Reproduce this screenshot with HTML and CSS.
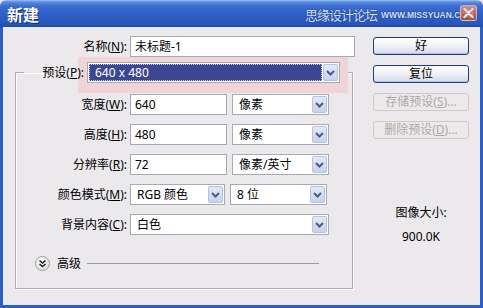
FILE: index.html
```html
<!DOCTYPE html>
<html lang="zh">
<head>
<meta charset="utf-8">
<title>新建</title>
<link rel="stylesheet" href="styles.css">
</head>
<body>
<div class="window">
  <div class="titlebar">
    <span class="title">新建</span>
    <span class="wm"><span class="wm-cn">思缘设计论坛</span><span class="wm-en">WWW.MISSYUAN.COM</span></span>
    <span class="close"><svg width="11" height="10" viewBox="0 0 11 10"><path d="M1.5 1 L9.5 9 M9.5 1 L1.5 9" stroke="#fff" stroke-width="2.2" stroke-linecap="round"/></svg></span>
  </div>
  <div class="frame">
    <div class="main">
      <div class="row name-row">
        <span class="lbl lbl-name">名称(<u>N</u>):</span>
        <div class="input w-name">未标题-1</div>
      </div>
      <fieldset class="group">
        <legend class="preset">
          <span class="plbl">预设(<u>P</u>):</span>
          <div class="select sel-preset">
            <span class="val focus">640 x 480</span>
            <span class="arrow"><svg width="9" height="6" viewBox="0 0 9 6"><path d="M1 1 L4.5 4.5 L8 1" fill="none" stroke="#4a5d86" stroke-width="2"/></svg></span>
          </div>
        </legend>
        <div class="rows">
          <div class="row">
            <span class="lbl">宽度(<u>W</u>):</span>
            <div class="input w-num">640</div>
            <div class="select w-unit"><span class="val">像素</span><span class="arrow"><svg width="9" height="6" viewBox="0 0 9 6"><path d="M1 1 L4.5 4.5 L8 1" fill="none" stroke="#4a5d86" stroke-width="2"/></svg></span></div>
          </div>
          <div class="row">
            <span class="lbl">高度(<u>H</u>):</span>
            <div class="input w-num">480</div>
            <div class="select w-unit"><span class="val">像素</span><span class="arrow"><svg width="9" height="6" viewBox="0 0 9 6"><path d="M1 1 L4.5 4.5 L8 1" fill="none" stroke="#4a5d86" stroke-width="2"/></svg></span></div>
          </div>
          <div class="row">
            <span class="lbl">分辨率(<u>R</u>):</span>
            <div class="input w-num">72</div>
            <div class="select w-unit"><span class="val">像素/英寸</span><span class="arrow"><svg width="9" height="6" viewBox="0 0 9 6"><path d="M1 1 L4.5 4.5 L8 1" fill="none" stroke="#4a5d86" stroke-width="2"/></svg></span></div>
          </div>
          <div class="row">
            <span class="lbl">颜色模式(<u>M</u>):</span>
            <div class="select w-mode"><span class="val">RGB 颜色</span><span class="arrow"><svg width="9" height="6" viewBox="0 0 9 6"><path d="M1 1 L4.5 4.5 L8 1" fill="none" stroke="#4a5d86" stroke-width="2"/></svg></span></div>
            <div class="select w-unit"><span class="val">8 位</span><span class="arrow"><svg width="9" height="6" viewBox="0 0 9 6"><path d="M1 1 L4.5 4.5 L8 1" fill="none" stroke="#4a5d86" stroke-width="2"/></svg></span></div>
          </div>
          <div class="row">
            <span class="lbl">背景内容(<u>C</u>):</span>
            <div class="select w-bg"><span class="val">白色</span><span class="arrow"><svg width="9" height="6" viewBox="0 0 9 6"><path d="M1 1 L4.5 4.5 L8 1" fill="none" stroke="#4a5d86" stroke-width="2"/></svg></span></div>
          </div>
        </div>
        <div class="adv">
          <span class="adv-btn"><svg width="9" height="9" viewBox="0 0 9 9"><path d="M1.5 1.5 L4.5 4 L7.5 1.5 M1.5 5 L4.5 7.5 L7.5 5" fill="none" stroke="#222" stroke-width="1.6"/></svg></span>
          <span class="adv-txt">高级</span>
          <span class="adv-line"></span>
        </div>
      </fieldset>
    </div>
    <div class="side">
      <div class="btn">好</div>
      <div class="btn">复位</div>
      <div class="btn disabled">存储预设(<u>S</u>)...</div>
      <div class="btn disabled">删除预设(<u>D</u>)...</div>
      <div class="info">
        <div class="info-t">图像大小:</div>
        <div class="info-v">900.0K</div>
      </div>
    </div>
  </div>
</div>
</body>
</html>
```

FILE: styles.css
```css
* { box-sizing: border-box; }
html, body { margin: 0; padding: 0; }
body {
  width: 483px;
  height: 308px;
  overflow: hidden;
  font-family: "Noto Sans", "Noto Sans CJK SC", sans-serif;
  font-size: 12px;
  line-height: 14px;
  color: #000;
  background: #ece9ec;
}
u { text-decoration: underline; text-underline-offset: 1px; }

.window {
  width: 483px;
  height: 308px;
  display: flex;
  flex-direction: column;
  position: relative;
}

/* title bar */
.titlebar {
  height: 27px;
  flex: none;
  display: flex;
  align-items: center;
  padding-left: 7px;
  padding-right: 9px;
  background: linear-gradient(#9cc0f2 0, #5a8ce0 2px, #3a6dd0 6px, #2f61c7 14px, #2a59be 22px, #204cab 27px);
  border-radius: 6px 6px 0 0;
}
.title {
  font-family: "Noto Sans CJK SC", sans-serif;
  font-size: 16px;
  font-weight: bold;
  color: #fff;
  text-shadow: 1px 1px 0 #0c2c78;
  line-height: 18px;
}
.wm {
  margin-left: auto;
  display: flex;
  align-items: center;
  gap: 4px;
  margin-top: 2px;
}
.wm-cn {
  font-family: "Noto Sans CJK SC", sans-serif;
  font-size: 13px;
  letter-spacing: -1px;
  color: #d4def2;
  text-shadow: 0 0 1px #1d3f8c, 0 0 1px #1d3f8c;
}
.wm-en {
  font-family: "Liberation Sans", sans-serif;
  font-size: 8.5px;
  font-weight: bold;
  color: #d4def2;
  text-shadow: 0 0 1px #1d3f8c, 0 0 1px #1d3f8c;
}
.close {
  position: absolute;
  right: 6px;
  top: 5px;
  width: 17px;
  height: 16px;
  border-radius: 3px;
  border: 1px solid rgba(255,255,255,0.6);
  background: linear-gradient(#eda085, #d8603a 60%, #c44e2c);
  display: flex;
  align-items: center;
  justify-content: center;
  opacity: 0.8;
}

/* frame */
.frame {
  flex: 1;
  display: flex;
  border: 3px solid #2c5dc5;
  border-top: 0;
  background: #ece9ec;
}
.main {
  width: 352px;
  flex: none;
  padding-top: 9px;
}
.row {
  display: flex;
  align-items: center;
  height: 21px;
  gap: 3px;
}
.lbl {
  width: 111px;
  text-align: right;
  white-space: nowrap;
}
.lbl-name { width: 124px; }

.input {
  height: 21px;
  border: 1px solid #a7abb0;
  background: #fff;
  padding-left: 4px;
  line-height: 19px;
}
.w-name { width: 225px; }
.w-num { width: 97px; }

.select {
  height: 21px;
  border: 1px solid #a7abb0;
  background: #fff;
  display: flex;
  align-items: stretch;
  padding: 1px;
}
.select .val {
  flex: 1;
  padding-left: 5px;
  line-height: 17px;
  white-space: nowrap;
}
.select .arrow {
  width: 15px;
  flex: none;
  border: 1px solid #b4c3e4;
  border-radius: 2px;
  background: linear-gradient(#e2eaf8, #c6d3ee);
  display: flex;
  align-items: center;
  justify-content: center;
}
.w-unit { width: 97px; margin-left: 2px; }
.w-mode { width: 95px; }
.w-bg { width: 199px; }

/* group */
.group {
  margin: 5px 0 0 12px;
  width: 338px;
  padding: 0 0 17px 0;
  border: 1px solid #aeacaf;
  box-shadow: inset 1px 1px 0 #fff, 1px 1px 0 #fff;
  min-width: 0;
}
.preset {
  margin-left: 8px;
  padding: 0 8px 0 0;
  display: flex;
  align-items: center;
  position: relative;
  z-index: 0;
}
.preset::before {
  content: "";
  position: absolute;
  left: 54px;
  right: 0;
  top: -5px;
  bottom: -10px;
  background: #efd5d8;
  z-index: -1;
}
.plbl {
  width: 60px;
  text-align: right;
  margin-right: 3px;
  white-space: nowrap;
}
.sel-preset { width: 253px; }
.sel-preset .val.focus {
  background: #3c4794;
  color: #fff;
  outline: 1px dotted #c9cbe0;
  outline-offset: -1px;
  padding-left: 6px;
  margin-right: 1px;
}

.rows {
  margin-top: 11px;
  display: flex;
  flex-direction: column;
  gap: 9px;
}

.adv {
  margin-top: 21px;
  margin-right: 33px;
  padding-left: 19px;
  display: flex;
  align-items: center;
  height: 15px;
}
.adv-btn {
  width: 15px;
  height: 15px;
  border-radius: 50%;
  border: 1px solid #a3a3a3;
  background: radial-gradient(circle at 40% 35%, #ffffff, #e4e4e4 60%, #c9c9c9);
  display: flex;
  align-items: center;
  justify-content: center;
}
.adv-txt { margin-left: 7px; }
.adv-line {
  flex: 1;
  margin-left: 6px;
  height: 1px;
  background: #9c9a9c;
}

/* side */
.side {
  flex: 1;
  padding: 10px 0 0 18px;
  display: flex;
  flex-direction: column;
  gap: 10px;
}
.btn {
  width: 96px;
  height: 18px;
  border: 1px solid #1d3e74;
  border-radius: 3px;
  background: linear-gradient(#ffffff, #f1f3f9 45%, #d3daea);
  box-shadow: inset 0 -1px 0 #b5c3e0;
  text-align: center;
  line-height: 16px;
  white-space: nowrap;
}
.btn.disabled {
  border-color: #cdcbc5;
  background: #ece9ec;
  box-shadow: none;
  color: #aca9a4;
}
.info {
  width: 96px;
  margin-top: 57px;
  text-align: center;
}
.info-t { line-height: 14px; }
.info-v { margin-top: 10px; line-height: 14px; }
```
